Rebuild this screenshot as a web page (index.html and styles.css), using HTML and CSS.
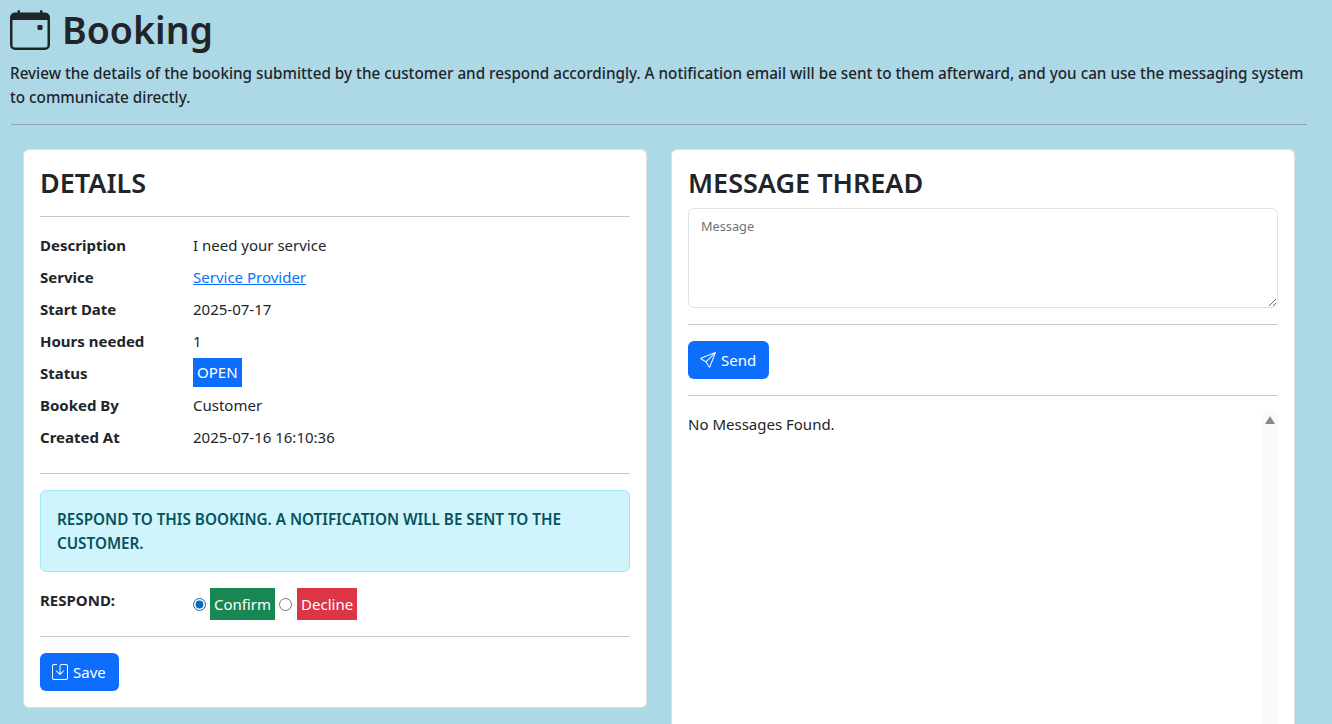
FILE: index.html
```html
<!DOCTYPE html>
<html>
	<head>
		<title>Booking</title>
		<link rel="stylesheet" href="styles.css">
	</head>
	<body>
		<header class="top">
			<h1 class="title">
				<svg class="title-icon" viewBox="0 0 16 16" fill="currentColor">
					<path d="M11 6.5a.5.5 0 0 1 .5-.5h1a.5.5 0 0 1 .5.5v1a.5.5 0 0 1-.5.5h-1a.5.5 0 0 1-.5-.5z"/>
					<path d="M3.5 0a.5.5 0 0 1 .5.5V1h8V.5a.5.5 0 0 1 1 0V1h1a2 2 0 0 1 2 2v11a2 2 0 0 1-2 2H2a2 2 0 0 1-2-2V3a2 2 0 0 1 2-2h1V.5a.5.5 0 0 1 .5-.5M1 4v10a1 1 0 0 0 1 1h12a1 1 0 0 0 1-1V4z"/>
				</svg>
				Booking
			</h1>
			<p class="lead">Review the details of the booking submitted by the customer and respond accordingly. A notification email will be sent to them afterward, and you can use the messaging system to communicate directly.</p>
			<hr class="top-rule">
		</header>

		<main class="cards">
			<section class="card">
				<h3 class="card-title">DETAILS</h3>
				<hr class="rule rule-title">
				<dl class="details">
					<dt>Description</dt>
					<dd>I need your service</dd>
					<dt>Service</dt>
					<dd><a href="#">Service Provider</a></dd>
					<dt>Start Date</dt>
					<dd>2025-07-17</dd>
					<dt>Hours needed</dt>
					<dd>1</dd>
					<dt>Status</dt>
					<dd><span class="tag tag-open">OPEN</span></dd>
					<dt>Booked By</dt>
					<dd>Customer</dd>
					<dt>Created At</dt>
					<dd>2025-07-16 16:10:36</dd>
				</dl>
				<hr class="rule rule-details">
				<div class="alert">RESPOND TO THIS BOOKING. A NOTIFICATION WILL BE SENT TO THE CUSTOMER.</div>
				<div class="respond">
					<span class="respond-label">RESPOND:</span>
					<div class="choices">
						<input type="radio" name="respond" checked>
						<span class="tag tag-confirm">Confirm</span>
						<input type="radio" name="respond">
						<span class="tag tag-decline">Decline</span>
					</div>
				</div>
				<hr class="rule">
				<button class="btn">
					<svg class="btn-icon" viewBox="0 0 16 16" fill="currentColor">
						<path d="M2 1a1 1 0 0 0-1 1v12a1 1 0 0 0 1 1h12a1 1 0 0 0 1-1V2a1 1 0 0 0-1-1H9.5a1 1 0 0 0-1 1v7.293l2.646-2.647a.5.5 0 0 1 .708.708l-3.5 3.5a.5.5 0 0 1-.708 0l-3.5-3.5a.5.5 0 1 1 .708-.708L7.5 9.293V2a2 2 0 0 1 2-2H14a2 2 0 0 1 2 2v12a2 2 0 0 1-2 2H2a2 2 0 0 1-2-2V2a2 2 0 0 1 2-2h2.5a.5.5 0 0 1 0 1z"/>
					</svg>
					Save
				</button>
			</section>

			<section class="card card-thread">
				<h3 class="card-title">MESSAGE THREAD</h3>
				<textarea class="message" placeholder="Message"></textarea>
				<hr class="rule">
				<button class="btn">
					<svg class="btn-icon" viewBox="0 0 16 16" fill="currentColor">
						<path d="M15.854.146a.5.5 0 0 1 .11.54l-5.819 14.547a.75.75 0 0 1-1.329.124l-3.178-4.995L.643 7.184a.75.75 0 0 1 .124-1.33L15.314.037a.5.5 0 0 1 .54.11ZM6.636 10.07l2.761 4.338L14.13 2.576zm6.787-8.201L1.591 6.602l4.339 2.76z"/>
					</svg>
					Send
				</button>
				<hr class="rule">
				<div class="thread">
					<p class="empty">No Messages Found.</p>
					<div class="scrollbar"><span class="scroll-up"></span></div>
				</div>
			</section>
		</main>
	</body>
</html>
```

FILE: styles.css
```css
html, body {
	height: 724px;
	overflow: hidden;
}

body {
	margin: 0;
	background: #add8e6;
	color: #212529;
	font-family: "Noto Sans", "Open Sans", sans-serif;
	font-size: 15px;
	line-height: 24px;
}

.top {
	padding: 10px 25px 0 10px;
}

.title {
	display: flex;
	align-items: center;
	gap: 12px;
	margin: 0 0 8px;
	height: 40px;
	font-size: 37.5px;
	line-height: 40px;
	font-weight: 600;
}

.title-icon {
	width: 40px;
	height: 40px;
	flex: none;
}

.lead {
	margin: 11px 0 15px;
	font-size: 15.25px;
	font-weight: 500;
}

.top-rule {
	margin: 0 0 0 1px;
	border: 0;
	border-top: 1px solid #8fa7b1;
}

.cards {
	display: grid;
	grid-template-columns: 624px 624px;
	gap: 24px;
	padding: 24px 0 0 23px;
	align-items: start;
}

.card {
	background: #fff;
	border: 1px solid rgba(0, 0, 0, .125);
	border-radius: 6px;
	padding: 16px;
}

.card-thread {
	height: 800px;
}

.card-title {
	margin: 0 0 8px;
	font-size: 27px;
	line-height: 34px;
	font-weight: 600;
}

.rule {
	margin: 16px 0;
	border: 0;
	border-top: 1px solid #c8c8c8;
}

.rule-title {
	margin: 16px 0 12px;
}

.rule-details {
	margin-top: 20px;
}

.details {
	display: grid;
	grid-template-columns: 153px 1fr;
	grid-auto-rows: 32px;
	margin: 0;
	align-items: center;
}

.details dt {
	font-weight: 700;
}

.details dd {
	margin: 0;
}

a {
	color: #0d6efd;
}

.tag {
	display: inline-block;
	padding: 0 4px;
	color: #fff;
}

.tag-open {
	display: block;
	width: fit-content;
	margin-bottom: 1px;
	background: #0d6efd;
	line-height: 29px;
}

.tag-confirm {
	background: #198754;
	line-height: 32px;
}

.tag-decline {
	margin-left: 1px;
	background: #dc3545;
	line-height: 32px;
}

.alert {
	padding: 16px;
	background: #cff4fc;
	border: 1px solid #9eeaf9;
	border-radius: 6px;
	color: #055160;
	font-size: 15.25px;
	font-weight: 600;
}

.respond {
	display: grid;
	grid-template-columns: 153px 1fr;
	margin-top: 16px;
}

.respond-label {
	font-weight: 700;
}

.choices {
	display: flex;
	align-items: center;
	height: 32px;
}

.choices input {
	width: 13px;
	height: 13px;
	margin: 0 4px 0 0;
	flex: none;
	accent-color: #0b69bd;
}

.choices .tag-confirm {
	margin-right: 4px;
}

.btn {
	display: inline-flex;
	align-items: center;
	gap: 5px;
	height: 38px;
	padding: 0 13px 0 12px;
	background: #0d6efd;
	border: 0;
	border-radius: 6px;
	color: #fff;
	font: inherit;
}

.btn-icon {
	width: 16px;
	height: 16px;
}

.message {
	display: block;
	box-sizing: border-box;
	width: 100%;
	height: 100px;
	padding: 8px 12px;
	background: #fff;
	border: 1px solid #dee2e6;
	border-radius: 6px;
	font-family: inherit;
	font-size: 12.75px;
	line-height: 18px;
}

.message::placeholder {
	color: #6c757d;
}

.thread {
	position: relative;
	height: 400px;
}

.empty {
	margin: 0;
}

.scrollbar {
	position: absolute;
	top: 0;
	right: 0;
	bottom: 0;
	width: 15px;
	background: #fafafa;
}

.scroll-up {
	position: absolute;
	top: 4px;
	left: 2px;
	width: 0;
	height: 0;
	border-left: 5px solid transparent;
	border-right: 5px solid transparent;
	border-bottom: 8px solid #8a8a8a;
}
```
